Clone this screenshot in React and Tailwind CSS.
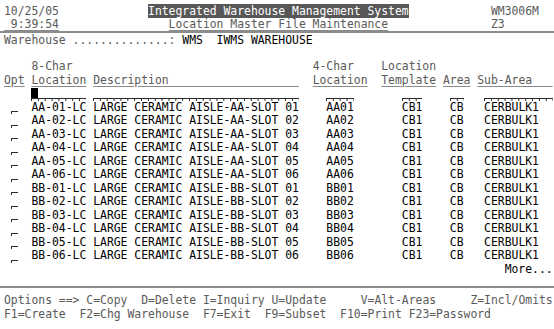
import React from "react";

const locations = ["AA", "BB"].flatMap((aisle) =>
  [1, 2, 3, 4, 5, 6].map((n) => {
    const slot = String(n).padStart(2, "0");
    return {
      loc: `${aisle}-${slot}-LC`,
      desc: `LARGE CERAMIC AISLE-${aisle}-SLOT ${slot}`,
      short: `${aisle}${slot}`,
    };
  })
);

const lbl = (col, t) => [col, t.length, <span className="text-[#5a5a5a]">{t}</span>];
const ul = (col, t) => [
  col,
  t.length,
  <span className="text-[#5a5a5a] underline decoration-[#8a8a8a] underline-offset-2">{t}</span>,
];
const dat = (col, t) => [col, t.length, <span className="text-black">{t}</span>];
const fld = (col, n, cursor) => [col, n, <Field n={n} cursor={cursor} />];

function Field({ n, cursor }) {
  return (
    <span className="relative inline-block align-top h-[13.5px] bg-[linear-gradient(#2a2a2a,#2a2a2a),linear-gradient(90deg,#2a2a2a_1px,transparent_1px)] [background-size:100%_1px,6.863px_3px] [background-position:0_calc(100%-2px),0_100%] [background-repeat:no-repeat,repeat-x]">
      {" ".repeat(n)}
      {cursor && <span className="absolute left-0 top-[1px] w-[6.86px] h-[10px] bg-black" />}
    </span>
  );
}

function Line({ segs = [], h = "h-[13.5px] leading-[13.5px]" }) {
  const out = [];
  let pos = 0;
  segs.forEach(([col, len, el], i) => {
    if (col > pos) out.push(" ".repeat(col - pos));
    out.push(React.cloneElement(el, { key: i }));
    pos = col + len;
  });
  return <div className={`${h} pl-[4px] whitespace-pre`}>{out}</div>;
}

export default function App() {
  return (
    <div className="w-[554px] h-[329px] bg-white pt-[4px] overflow-hidden font-['DejaVu_Sans_Mono',monospace] text-[11.4px]">
      <Line
        h="h-[14px] leading-[14px]"
        segs={[
          lbl(0, "10/25/05"),
          [21, 38, <span className="bg-[#585858] text-white">Integrated Warehouse Management System</span>],
          lbl(71, "WM3006M"),
        ]}
      />
      <Line
        h="h-[13px] leading-[13px]"
        segs={[ul(0, " 9:39:54"), ul(24, "Location Master File Maintenance"), lbl(71, "Z3")]}
      />
      <div className="h-[2px] bg-[#8c8c8c]" />
      <Line
        h="h-[14px] leading-[14px]"
        segs={[lbl(0, "Warehouse ..............:"), dat(26, "WMS"), dat(31, "IWMS WAREHOUSE")]}
      />
      <Line h="h-[13px] leading-[13px]" />
      <Line segs={[lbl(4, "8-Char"), lbl(45, "4-Char"), lbl(55, "Location")]} />
      <Line
        segs={[
          ul(0, "Opt"),
          ul(4, "Location"),
          ul(13, "Description".padEnd(30)),
          ul(45, "Location"),
          ul(55, "Template"),
          ul(64, "Area"),
          ul(69, "Sub-Area   "),
        ]}
      />
      <Line segs={[fld(4, 8, true), fld(13, 30), fld(47, 4), fld(58, 3), fld(65, 2), fld(70, 10)]} />
      {locations.map((r) => (
        <Line
          key={r.loc}
          segs={[
            fld(1, 1),
            dat(4, r.loc),
            dat(13, r.desc),
            dat(47, r.short),
            dat(58, "CB1"),
            dat(65, "CB"),
            dat(70, "CERBULK1"),
          ]}
        />
      ))}
      <Line segs={[dat(73, "More...")]} />
      <div className="h-[10px]" />
      <div className="h-[2px] bg-[#8c8c8c]" />
      <div className="h-[5px]" />
      <Line
        h="h-[14px] leading-[14px]"
        segs={[
          lbl(0, "Options ==>"),
          lbl(12, "C=Copy"),
          lbl(20, "D=Delete"),
          lbl(29, "I=Inquiry"),
          lbl(39, "U=Update"),
          lbl(52, "V=Alt-Areas"),
          lbl(68, "Z=Incl/Omits"),
        ]}
      />
      <Line
        h="h-[14px] leading-[14px]"
        segs={[
          lbl(0, "F1=Create"),
          lbl(11, "F2=Chg Warehouse"),
          lbl(29, "F7=Exit"),
          lbl(38, "F9=Subset"),
          lbl(49, "F10=Print"),
          lbl(59, "F23=Password"),
        ]}
      />
    </div>
  );
}
